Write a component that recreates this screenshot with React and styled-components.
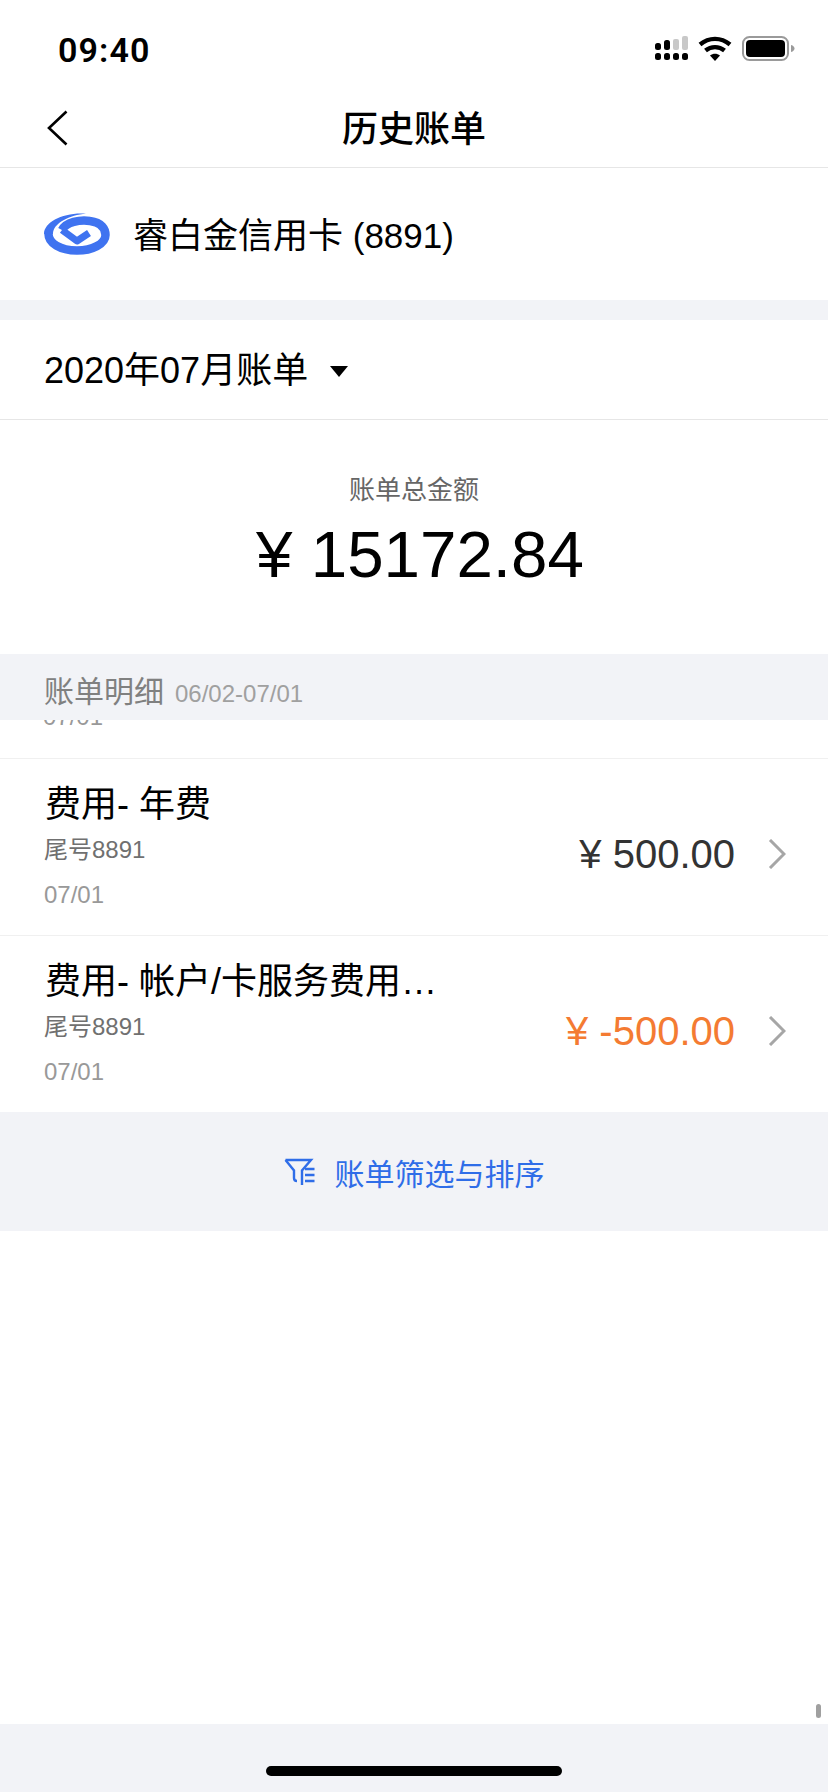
import React from 'react';
import styled, { createGlobalStyle } from 'styled-components';

const GlobalStyle = createGlobalStyle`
  html, body {
    margin: 0;
    padding: 0;
    background: #fff;
  }
  body {
    font-family: 'Liberation Sans', 'Noto Sans CJK SC', sans-serif;
  }
  * {
    box-sizing: border-box;
  }
`;

const bills = [
  { id: 1, title: '费用- 年费', amount: '¥ 500.00' },
  { id: 2, title: '费用- 帐户/卡服务费用…', amount: '¥ -500.00', refund: true },
];

const StatusIcons = () => (
  <svg width="142" height="26" viewBox="0 0 142 26">
    <g fill="#000">
      <rect x="2" y="17" width="6" height="7" rx="2.5" />
      <rect x="11" y="17" width="6" height="7" rx="2.5" />
      <rect x="20" y="17" width="6" height="7" rx="2.5" />
      <rect x="29" y="17" width="6" height="7" rx="2.5" />
      <rect x="2" y="7" width="6" height="7" rx="2.5" />
      <rect x="11" y="4" width="6" height="10" rx="2.5" />
    </g>
    <g fill="#c8c8c8">
      <rect x="20" y="3" width="6" height="11" rx="2" />
      <rect x="29" y="0" width="6" height="14" rx="2" />
    </g>
    <g fill="none" stroke="#000" strokeWidth="4.4">
      <path d="M47 8.500c9-7.500 21-7.500 30 0" />
      <path d="M52.500 14.500c5.500-4.500 13.500-4.500 19 0" />
    </g>
    <path d="M57 19.500c3-2.400 7-2.400 10 0l-5 5.500z" fill="#000" />
    <rect x="90" y="1" width="45" height="23" rx="6.500" fill="none" stroke="#9a9a9a" strokeWidth="2" />
    <rect x="93" y="4" width="39" height="17" rx="4" fill="#000" />
    <path d="M138 9c2.400.6 3.500 2 3.500 3.500s-1.100 2.900-3.500 3.500z" fill="#9a9a9a" />
  </svg>
);

const BankLogo = () => (
  <svg width="66" height="42" viewBox="0 0 66 42" fill="none" stroke="#3f73f0" strokeLinejoin="round">
    <path
      strokeWidth="8.500"
      d="M18 17C22 9 36 6.500 46 8C58 9.500 61.500 16 61.500 22C61.500 31 48 37.500 33 37.500C16 37.500 4.500 30 4.500 21"
    />
    <path fill="#3f73f0" stroke="none" d="M0 21C0 9 20 -1 42 .8C26 2 9 10 9 21z" />
    <path strokeWidth="7" d="M18 17L33 28L45 20" />
  </svg>
);

const FilterIcon = () => (
  <svg width="31" height="27" viewBox="0 0 31 27" fill="none" stroke="#2f6de8" strokeWidth="2.400">
    <path d="M1.500 2h25.500L18 12.500V27" />
    <path d="M1.500 2l8.500 10.500V20c0 2 1 3 3 3" />
    <path d="M21 11h9.500M21 17h9.500M21 23h9.500" />
  </svg>
);

const App = () => {
  return (
    <Page>
      <GlobalStyle />
      <StatusBar>
        <Clock>09:40</Clock>
        <StatusIcons />
      </StatusBar>

      <NavBar>
        <BackButton>
          <svg width="22" height="36" viewBox="0 0 22 36" fill="none" stroke="#000" strokeWidth="2.600">
            <path d="M20.500 1.500L3 18l17.500 16.500" />
          </svg>
        </BackButton>
        <NavTitle>历史账单</NavTitle>
      </NavBar>

      <CardRow>
        <BankLogo />
        <CardName>睿白金信用卡 (8891)</CardName>
      </CardRow>

      <MonthRow>
        <MonthText>2020年07月账单</MonthText>
        <Caret />
      </MonthRow>

      <Summary>
        <SummaryLabel>账单总金额</SummaryLabel>
        <SummaryAmount>¥ 15172.84</SummaryAmount>
      </Summary>

      <DetailHeader>
        <DetailTitle>账单明细</DetailTitle>
        <DetailRange>06/02-07/01</DetailRange>
      </DetailHeader>

      <ClippedRow>
        <BillDate>07/01</BillDate>
      </ClippedRow>

      {bills.map((bill) => (
        <BillRow key={bill.id}>
          <BillInfo>
            <BillTitle>{bill.title}</BillTitle>
            <BillCard>尾号8891</BillCard>
            <BillDate>07/01</BillDate>
          </BillInfo>
          <BillSide>
            <BillAmount $refund={bill.refund}>{bill.amount}</BillAmount>
            <svg width="18" height="30" viewBox="0 0 18 30" fill="none" stroke="#a6a6a6" strokeWidth="3">
              <path d="M2 1l14 14L2 29" />
            </svg>
          </BillSide>
        </BillRow>
      ))}

      <FilterBar>
        <FilterIcon />
        <FilterText>账单筛选与排序</FilterText>
      </FilterBar>

      <Spacer />

      <HomeArea>
        <HomeBar />
      </HomeArea>
      <ScrollThumb />
    </Page>
  );
};

const Page = styled.div`
  position: relative;
  width: 828px;
  height: 1792px;
  display: flex;
  flex-direction: column;
  overflow: hidden;
  background: #fff;
`;

const StatusBar = styled.div`
  height: 88px;
  flex: none;
  display: flex;
  justify-content: space-between;
  align-items: flex-start;
  padding: 36px 33px 0 58px;
`;

const Clock = styled.div`
  font-family: Roboto, sans-serif;
  font-size: 34px;
  line-height: 28px;
  font-weight: 600;
  letter-spacing: 1.100px;
  color: #000;
`;

const NavBar = styled.div`
  position: relative;
  height: 80px;
  flex: none;
  display: flex;
  align-items: center;
  justify-content: center;
  padding-bottom: 4px;
  border-bottom: 1px solid #e6e6e6;
`;

const BackButton = styled.div`
  position: absolute;
  left: 46px;
  top: 22px;
  display: flex;
`;

const NavTitle = styled.div`
  font-size: 36px;
  font-weight: 500;
  color: #000;
`;

const CardRow = styled.div`
  height: 152px;
  flex: none;
  display: flex;
  align-items: center;
  gap: 23px;
  padding: 0 44px;
  border-bottom: 20px solid #f2f3f7;
`;

const CardName = styled.div`
  font-size: 35px;
  padding-bottom: 4px;
  color: #000;
`;

const MonthRow = styled.div`
  height: 100px;
  flex: none;
  display: flex;
  align-items: center;
  gap: 22px;
  padding: 0 44px 5px;
  border-bottom: 1px solid #e6e6e6;
`;

const MonthText = styled.div`
  font-size: 36px;
  color: #000;
`;

const Caret = styled.div`
  width: 0;
  height: 0;
  margin-top: 8px;
  border-left: 9px solid transparent;
  border-right: 9px solid transparent;
  border-top: 11px solid #000;
`;

const Summary = styled.div`
  height: 234px;
  flex: none;
  display: flex;
  flex-direction: column;
  align-items: center;
  padding-top: 52px;
`;

const SummaryLabel = styled.div`
  font-size: 26px;
  line-height: 36px;
  color: #666;
`;

const SummaryAmount = styled.div`
  margin-top: 10px;
  padding-left: 12px;
  font-size: 65.500px;
  line-height: 74px;
  color: #000;
`;

const DetailHeader = styled.div`
  height: 66px;
  flex: none;
  display: flex;
  align-items: baseline;
  gap: 11px;
  padding: 19px 44px 0;
  background: #f2f3f7;
`;

const DetailTitle = styled.div`
  font-size: 30px;
  line-height: 38px;
  color: #808080;
`;

const DetailRange = styled.div`
  font-size: 24px;
  color: #a0a0a0;
`;

const ClippedRow = styled.div`
  height: 38px;
  flex: none;
  display: flex;
  flex-direction: column;
  justify-content: flex-end;
  overflow: hidden;
  padding: 0 44px 26px;
`;

const BillRow = styled.div`
  height: 177px;
  flex: none;
  display: flex;
  justify-content: space-between;
  padding: 0 42px 0 45px;
  border-top: 1px solid #f0f0f0;
`;

const BillInfo = styled.div`
  display: flex;
  flex-direction: column;
  padding-top: 25px;
`;

const BillTitle = styled.div`
  font-size: 36px;
  line-height: 42px;
  color: #000;
`;

const BillCard = styled.div`
  margin-top: 9px;
  margin-left: -1px;
  font-size: 24px;
  line-height: 30px;
  color: #707070;
`;

const BillDate = styled.div`
  margin-top: 15px;
  margin-left: -1px;
  font-size: 24px;
  line-height: 30px;
  color: #999;
  flex: none;
`;

const BillSide = styled.div`
  display: flex;
  align-items: center;
  gap: 33px;
  padding-top: 14px;
`;

const BillAmount = styled.div`
  font-size: 40px;
  color: ${(props) => (props.$refund ? '#f47b32' : '#333')};
`;

const FilterBar = styled.div`
  height: 119px;
  flex: none;
  display: flex;
  align-items: center;
  justify-content: center;
  gap: 20px;
  background: #f2f3f7;
`;

const FilterText = styled.div`
  font-size: 30px;
  color: #2f6de8;
`;

const Spacer = styled.div`
  flex: 1;
`;

const HomeArea = styled.div`
  height: 68px;
  flex: none;
  display: flex;
  justify-content: center;
  padding-top: 42px;
  background: #f2f3f7;
`;

const HomeBar = styled.div`
  width: 296px;
  height: 10px;
  border-radius: 5px;
  background: #000;
`;

const ScrollThumb = styled.div`
  position: absolute;
  right: 7px;
  top: 1704px;
  width: 5px;
  height: 14px;
  border-radius: 3px;
  background: #a0a0a0;
`;

export default App;
